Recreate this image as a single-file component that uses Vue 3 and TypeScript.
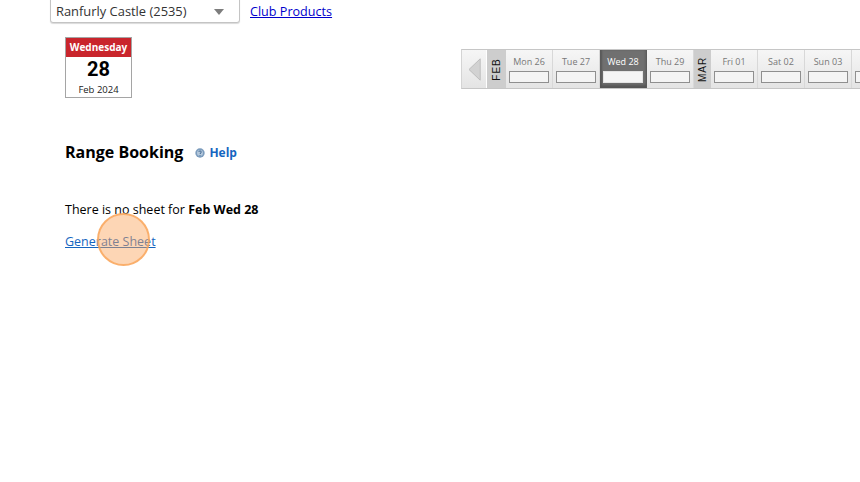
<script setup lang="ts">
interface Item { kind: 'day' | 'month'; label: string; active?: boolean; narrow?: boolean }
const items: Item[] = [
  { kind: 'month', label: 'FEB' },
  { kind: 'day', label: 'Mon 26' },
  { kind: 'day', label: 'Tue 27' },
  { kind: 'day', label: 'Wed 28', active: true },
  { kind: 'day', label: 'Thu 29' },
  { kind: 'month', label: 'MAR', narrow: true },
  { kind: 'day', label: 'Fri 01' },
  { kind: 'day', label: 'Sat 02' },
  { kind: 'day', label: 'Sun 03' },
  { kind: 'day', label: '' },
]
</script>

<template>
  <div class="page">
    <div class="top">
      <div class="select">
        <span>Ranfurly Castle (2535)</span>
        <i class="caret"></i>
      </div>
      <a class="products" href="#">Club Products</a>
    </div>
    <div class="dateline">
      <div class="cal">
        <div class="cal-head">Wednesday</div>
        <div class="cal-num">28</div>
        <div class="cal-sub">Feb 2024</div>
      </div>
      <div class="strip">
        <div class="prev">
          <svg width="13" height="23" viewBox="0 0 13 23"><path d="M12.2 0.8 L1 11.5 L12.2 22.2 Z" fill="#d2d2d2" stroke="#bdbdbd" /></svg>
        </div>
        <template v-for="(item, i) in items" :key="i">
          <div v-if="item.kind === 'month'" class="month" :class="{ narrow: item.narrow }"><span>{{ item.label }}</span></div>
          <div v-else class="day" :class="{ active: item.active }">
            <div class="day-label">{{ item.label }}</div>
            <div class="day-box"></div>
          </div>
        </template>
      </div>
    </div>
    <div class="heading">
      <h1>Range Booking</h1>
      <span class="help">
        <svg width="10" height="10" viewBox="0 0 10 10">
          <circle cx="5" cy="5" r="4.7" fill="#7c9cbd" />
          <circle cx="5" cy="5" r="3" fill="#b4c8dc" />
          <path d="M3.7 3.8 C4 2.6 6.3 2.6 6.3 4 C6.3 5 5 5 5 6 M5 7 V7.8" fill="none" stroke="#3f6690" stroke-width="1" />
        </svg>
        Help
      </span>
    </div>
    <p class="msg">There is no sheet for <b>Feb Wed 28</b></p>
    <div class="gen-wrap">
      <a class="gen" href="#">Generate Sheet</a>
      <div class="spot"></div>
    </div>
  </div>
</template>

<style>
html, body { margin: 0; background: #fff; overflow: hidden; }
</style>

<style scoped>
.page {
  width: 860px;
  height: 482px;
  overflow: hidden;
  box-sizing: border-box;
  font-family: "Open Sans", "Liberation Sans", sans-serif;
  font-size: 12.5px;
  color: #000;
  background: #fff;
}
.top {
  display: flex;
  align-items: flex-end;
  height: 23px;
  padding-left: 50px;
}
.select {
  box-sizing: border-box;
  flex: none;
  width: 190px;
  height: 30px;
  margin-top: -7px;
  border: 1px solid #c4c4c4;
  border-radius: 3px;
  box-shadow: 0 1px 1px rgba(0, 0, 0, 0.15);
  padding: 9px 15px 0 5px;
  display: flex;
  justify-content: space-between;
  color: #333;
  font-size: 12.9px;
  line-height: 17px;
  background: #fff;
}
.caret {
  width: 0;
  height: 0;
  margin-top: 6px;
  border-left: 5px solid transparent;
  border-right: 5px solid transparent;
  border-top: 6px solid #7d7d7d;
}
.products {
  margin-left: 10px;
  margin-bottom: 3px;
  color: #0000cc;
  font-size: 12.6px;
  line-height: 17px;
}
.dateline {
  display: flex;
  align-items: flex-start;
  margin-top: 14px;
  padding-left: 65px;
}
.cal {
  box-sizing: border-box;
  flex: none;
  width: 67px;
  height: 61px;
  border: 1px solid #a5a5a5;
  text-align: center;
}
.cal-head {
  height: 19px;
  background: #c9252c;
  color: #fff;
  font-size: 10px;
  font-weight: 700;
  line-height: 19px;
}
.cal-num {
  font-family: Roboto, "Liberation Sans", sans-serif;
  font-size: 20px;
  font-weight: 700;
  line-height: 25px;
}
.cal-sub {
  font-size: 9.5px;
  line-height: 14px;
  margin-top: 1px;
  color: #222;
}
.strip {
  display: flex;
  flex: none;
  box-sizing: border-box;
  height: 40px;
  margin-left: 329px;
  margin-top: 12px;
  border-top: 1px solid #c6c6c6;
  border-bottom: 1px solid #c6c6c6;
  border-left: 1px solid #d4d4d4;
  background: linear-gradient(#f6f6f6, #e4e4e4);
}
.prev {
  width: 25px;
  box-sizing: border-box;
  flex: none;
  display: flex;
  align-items: center;
  justify-content: center;
  border-right: 1px solid #fff;
}
.month {
  flex: none;
  width: 19px;
  background: #cdcdcd;
  display: flex;
  align-items: center;
  justify-content: center;
}
.month.narrow { width: 17px; }
.month + .day { border-left: none; }
.month span {
  transform: rotate(-90deg);
  font-family: "Liberation Sans", sans-serif;
  font-size: 10px;
  letter-spacing: 1px;
  white-space: nowrap;
  color: #111;
}
.day {
  box-sizing: border-box;
  flex: none;
  width: 47px;
  border-right: 1px solid #d8d8d8;
  text-align: center;
}
.day-label {
  height: 13px;
  font-size: 9px;
  line-height: 13px;
  margin-top: 5px;
  color: #777;
}
.day-box {
  box-sizing: border-box;
  width: 40px;
  height: 12px;
  margin: 3px auto 0;
  border: 1px solid #8f8f8f;
  background: #f4f4f4;
}
.day.active {
  background: #707070;
  border-right-color: #5c5c5c;
  box-shadow: inset 0 -3px 3px #555, inset 2px 0 2px #5c5c5c;
}
.day.active .day-label { color: #fff; }
.day.active .day-box {
  border-color: #e4e4e4;
  background: #f5f5f5;
}
.heading {
  display: flex;
  align-items: center;
  margin-top: 43px;
  padding-left: 65px;
}
h1 {
  margin: 0;
  font-size: 16px;
  font-weight: 700;
  line-height: 22px;
}
.help {
  margin-left: 12px;
  margin-top: 1px;
  color: #1565c0;
  font-size: 12px;
  font-weight: 700;
}
.help svg { margin-right: 1px; vertical-align: -1px; }
.msg {
  margin: 38px 0 0;
  padding-left: 65px;
  line-height: 17px;
}
.gen-wrap {
  position: relative;
  margin: 15px 0 0 65px;
  line-height: 17px;
}
.gen {
  color: #1565c0;
}
.spot {
  position: absolute;
  left: 32px;
  top: -20px;
  width: 53px;
  height: 53px;
  box-sizing: border-box;
  border-radius: 50%;
  border: 2px solid rgba(250, 165, 90, 0.8);
  background: rgba(250, 165, 90, 0.45);
}
</style>
